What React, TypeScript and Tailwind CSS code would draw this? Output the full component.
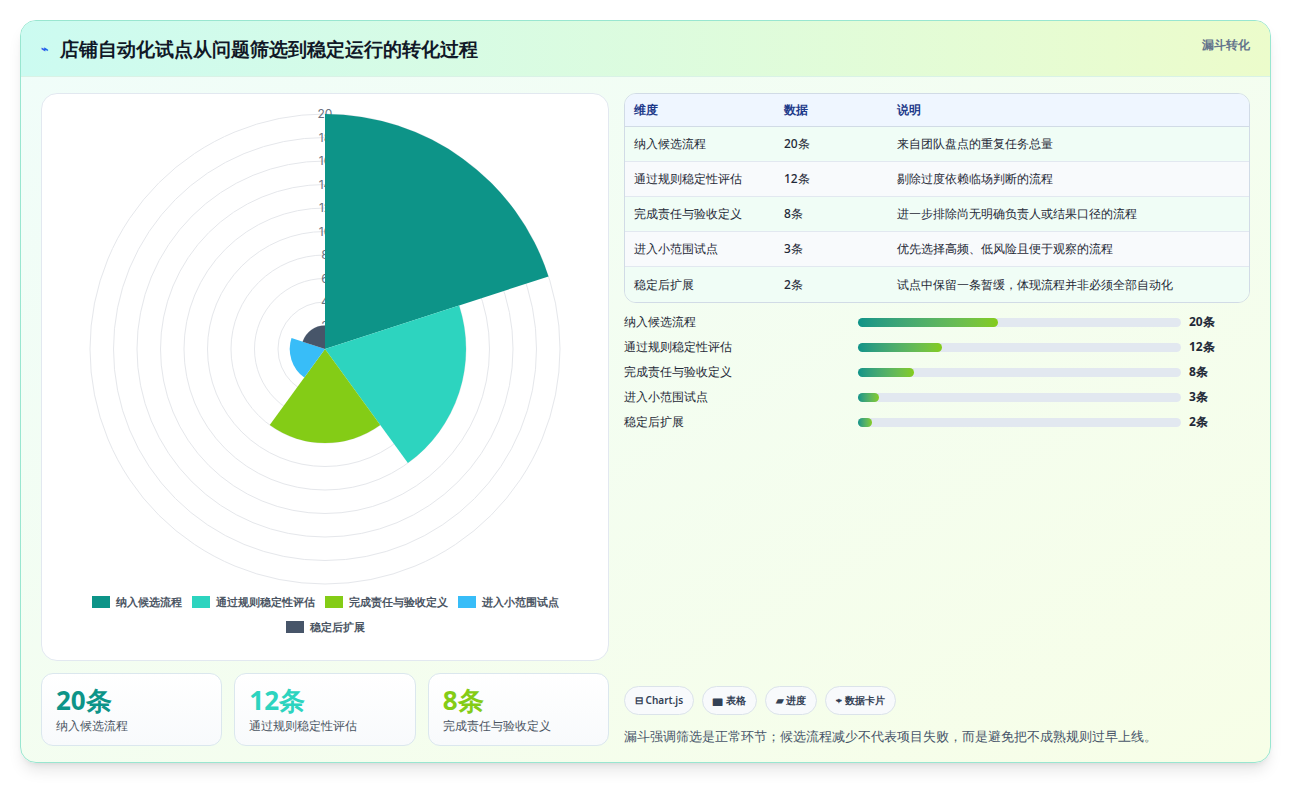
import React from 'react';

const ITEMS = [
  { name: '纳入候选流程', v: 20, desc: '来自团队盘点的重复任务总量', color: '#0d9488' },
  { name: '通过规则稳定性评估', v: 12, desc: '剔除过度依赖临场判断的流程', color: '#2dd4bf' },
  { name: '完成责任与验收定义', v: 8, desc: '进一步排除尚无明确负责人或结果口径的流程', color: '#84cc16' },
  { name: '进入小范围试点', v: 3, desc: '优先选择高频、低风险且便于观察的流程', color: '#38bdf8' },
  { name: '稳定后扩展', v: 2, desc: '试点中保留一条暂缓，体现流程并非必须全部自动化', color: '#475569' },
];

const CX = 283;
const CY = 255;
const R = 235;

function sector(r: number, a0: number, a1: number) {
  const rad = (d: number) => (d * Math.PI) / 180;
  const x0 = CX + r * Math.cos(rad(a0));
  const y0 = CY + r * Math.sin(rad(a0));
  const x1 = CX + r * Math.cos(rad(a1));
  const y1 = CY + r * Math.sin(rad(a1));
  return `M${CX} ${CY} L${x0} ${y0} A${r} ${r} 0 0 1 ${x1} ${y1} Z`;
}

function Polar() {
  const ticks = [2, 4, 6, 8, 10, 12, 14, 16, 18, 20];
  return (
    <svg width="568" height="500" className="block">
      {ticks.map((t) => (
        <circle key={t} cx={CX} cy={CY} r={(t / 20) * R} fill="none" stroke="#e5e7eb" strokeWidth="1" />
      ))}
      {ticks.map((t) => (
        <text key={t} x={CX} y={CY - (t / 20) * R + 4} textAnchor="middle" fontSize="12" fill="#6b7280" fontFamily="Inter, sans-serif">
          {t}
        </text>
      ))}
      {ITEMS.map((it, i) => (
        <path key={it.name} d={sector((it.v / 20) * R, -90 + i * 72, -18 + i * 72)} fill={it.color} />
      ))}
    </svg>
  );
}

export default function App() {
  return (
    <div className="min-h-screen bg-white p-5 font-['Inter','Noto_Sans_CJK_SC',sans-serif]">
      <div className="flex h-[743px] flex-col overflow-hidden rounded-2xl border border-[#99e6d0] bg-gradient-to-br from-[#f0fdfa] to-[#f7fee7] shadow-lg">
        <div className="flex h-14 shrink-0 items-start justify-between border-b border-[#d9f2e6] bg-gradient-to-r from-[#ccfbf1] to-[#ecfccb] px-5">
          <h1 className="mt-[14px] flex items-center gap-3 text-[19px] font-bold text-[#111827]">
            <span className="text-xs text-[#2563eb]">⌁</span>
            店铺自动化试点从问题筛选到稳定运行的转化过程
          </h1>
          <span className="mt-[16px] text-xs font-semibold text-[#64748b]">漏斗转化</span>
        </div>
        <div className="flex flex-1 gap-[15px] px-5 pt-4 pb-[18px]">
          <div className="w-[568px]">
            <div className="h-[568px] rounded-2xl border border-[#e2e8f0] bg-white">
              <Polar />
              <div className="flex flex-wrap justify-center gap-x-2.5 gap-y-2 px-4 text-[11px] font-semibold text-[#4b5563]">
                {ITEMS.map((it) => (
                  <span key={it.name} className="flex items-center gap-1.5">
                    <span className="h-3 w-[18px]" style={{ background: it.color }} />
                    {it.name}
                  </span>
                ))}
              </div>
            </div>
            <div className="mt-3 grid grid-cols-3 gap-3">
              {ITEMS.slice(0, 3).map((it) => (
                <div key={it.name} className="h-[73px] rounded-xl border border-[#dbe7ee] bg-gradient-to-b from-white to-[#f8fafc] px-3.5 pt-2">
                  <div className="text-[26px] font-bold leading-9" style={{ color: it.color }}>{it.v}条</div>
                  <div className="text-xs text-[#4b5563]">{it.name}</div>
                </div>
              ))}
            </div>
          </div>
          <div className="flex w-[628px] flex-col">
            <div className="overflow-hidden rounded-xl border border-[#d1dbe6] text-xs text-[#1f2937]">
              <div className="grid h-[33px] grid-cols-[150px_113px_1fr] items-center border-b border-[#d1dbe6] bg-[#eff6ff] px-[9px] font-semibold text-[#1e3a8a]">
                <span>维度</span><span>数据</span><span>说明</span>
              </div>
              {ITEMS.map((it, i) => (
                <div key={it.name} className={`grid h-[35px] grid-cols-[150px_113px_1fr] items-center px-[9px] font-medium ${i < 4 ? 'border-b border-[#e2e8f0]' : ''} ${i % 2 ? 'bg-[#f8fafc]' : 'bg-[#f0fdf6]'}`}>
                  <span>{it.name}</span><span>{it.v}条</span><span>{it.desc}</span>
                </div>
              ))}
            </div>
            <div className="mt-[10px] flex flex-col gap-[7px]">
              {ITEMS.map((it) => (
                <div key={it.name} className="flex h-[18px] items-center text-xs font-medium text-[#1f2937]">
                  <span className="w-[234px]">{it.name}</span>
                  <div className="h-[9px] w-[323px] rounded-full bg-[#e2e8f0]">
                    <div className="h-full rounded-full bg-gradient-to-r from-[#0d9488] to-[#84cc16]" style={{ width: `${(it.v / 46) * 100}%` }} />
                  </div>
                  <span className="ml-2 font-bold">{it.v}条</span>
                </div>
              ))}
            </div>
            <div className="mt-auto">
              <div className="flex gap-2 text-[10px] font-semibold text-[#334155]">
                {['⊟ Chart.js', '▆ 表格', '▰ 进度', '⌖ 数据卡片'].map((c) => (
                  <span key={c} className="flex h-[29px] items-center rounded-full border border-[#dbe3ea] bg-[#f8fafc] px-2.5">{c}</span>
                ))}
              </div>
              <p className="mt-[12px] text-[13px] font-medium text-[#475569]">
                漏斗强调筛选是正常环节；候选流程减少不代表项目失败，而是避免把不成熟规则过早上线。
              </p>
            </div>
          </div>
        </div>
      </div>
    </div>
  );
}
